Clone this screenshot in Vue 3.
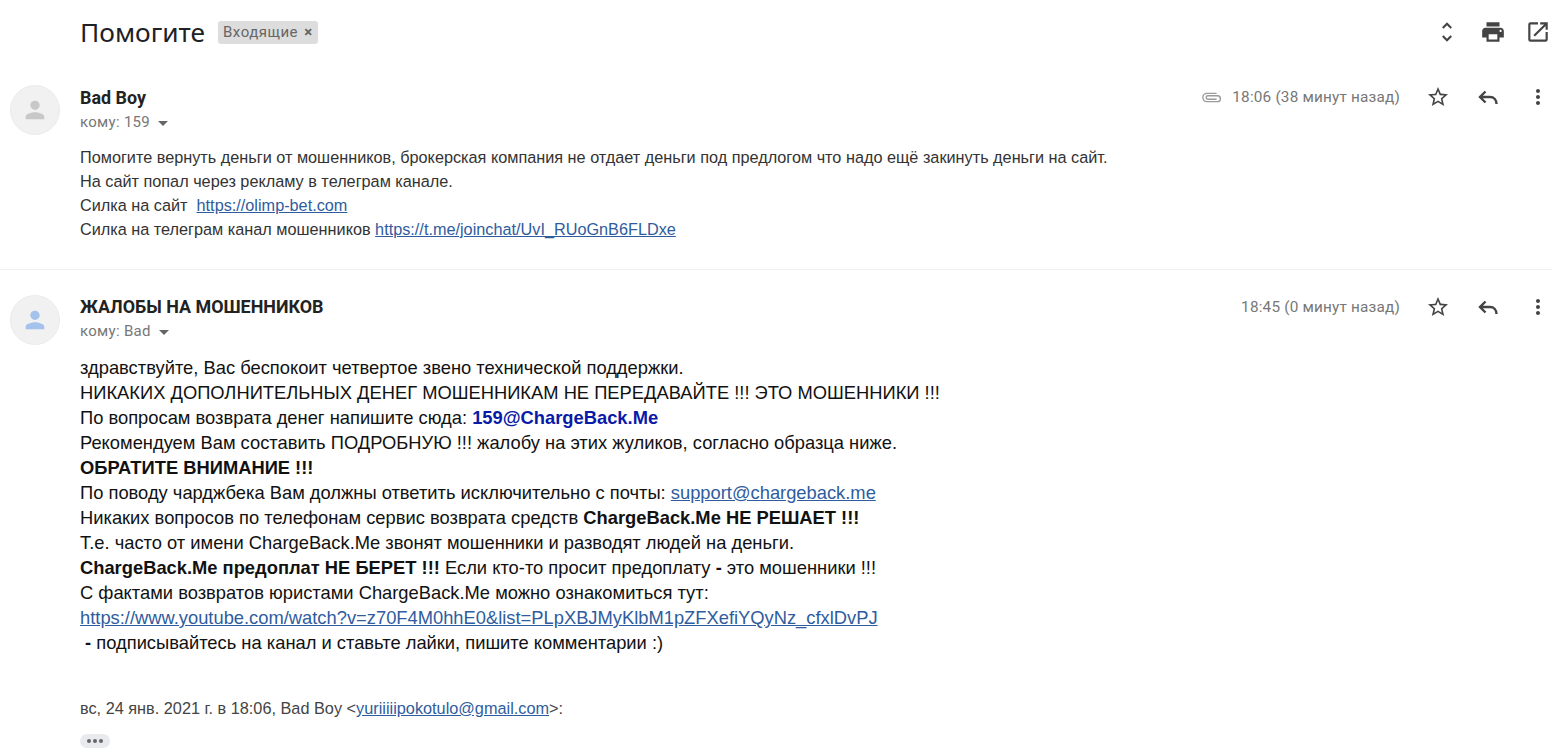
<template>
  <div class="page">
    <header class="subject-row">
      <h1 class="subject">Помогите</h1>
      <span class="label">Входящие <span class="label-x">×</span></span>
      <div class="top-icons">
        <svg class="icon" viewBox="0 0 24 24"><path d="M12 5.83 15.17 9l1.41-1.41L12 3 7.41 7.59 8.83 9 12 5.83zm0 12.34L8.83 15l-1.41 1.41L12 21l4.59-4.59L15.17 15 12 18.17z" /></svg>
        <svg class="icon" viewBox="0 0 24 24"><path d="M19 8H5c-1.66 0-3 1.34-3 3v6h4v4h12v-4h4v-6c0-1.66-1.34-3-3-3zm-3 11H8v-5h8v5zm3-7c-.55 0-1-.45-1-1s.45-1 1-1 1 .45 1 1-.45 1-1 1zm-1-9H6v4h12V3z" /></svg>
        <svg class="icon" viewBox="0 0 24 24"><path d="M19 19H5V5h7V3H5a2 2 0 0 0-2 2v14a2 2 0 0 0 2 2h14c1.1 0 2-.9 2-2v-7h-2v7zM14 3v2h3.59l-9.83 9.83 1.41 1.41L19 6.41V10h2V3h-7z" /></svg>
      </div>
    </header>

    <section class="message first">
      <div class="avatar">
        <svg viewBox="0 0 24 24" class="avatar-icon grey"><path d="M12 12c2.2 0 4-1.8 4-4s-1.8-4-4-4-4 1.8-4 4 1.8 4 4 4zm0 2c-2.7 0-8 1.3-8 4v2h16v-2c0-2.7-5.3-4-8-4z" /></svg>
      </div>
      <div class="content">
        <div class="head">
          <div class="who">
            <div class="sender">Bad Boy</div>
            <div class="to">кому: 159 <i class="caret"></i></div>
          </div>
          <div class="meta">
            <svg class="clip" viewBox="0 0 24 12"><path d="M17 1.5H6.5a4.5 4.5 0 0 0 0 9H18a3.2 3.2 0 0 0 0-6.4H7.5a1.9 1.9 0 0 0 0 3.8H17" fill="none" stroke="#9a9a9a" stroke-width="1.5" /></svg>
            <span class="time">18:06 (38 минут назад)</span>
            <svg class="icon small" viewBox="0 0 24 24"><path d="M22 9.24l-7.19-.62L12 2 9.19 8.63 2 9.24l5.46 4.73L5.82 21 12 17.27 18.18 21l-1.63-7.03L22 9.24zM12 15.4l-3.76 2.27 1-4.28-3.32-2.88 4.38-.38L12 6.1l1.71 4.04 4.38.38-3.32 2.88 1 4.28L12 15.4z" /></svg>
            <svg class="icon small" viewBox="0 0 24 24"><path d="M9.5 6.5 4 12l5.5 5.5M4.5 12H14c4 0 6.5 3 6.5 7" fill="none" stroke="#444" stroke-width="2.4" /></svg>
            <svg class="icon small" viewBox="0 0 24 24"><path d="M12 8c1.1 0 2-.9 2-2s-.9-2-2-2-2 .9-2 2 .9 2 2 2zm0 2c-1.1 0-2 .9-2 2s.9 2 2 2 2-.9 2-2-.9-2-2-2zm0 6c-1.1 0-2 .9-2 2s.9 2 2 2 2-.9 2-2-.9-2-2-2z" /></svg>
          </div>
        </div>
        <div class="body small-body">
          <div>Помогите вернуть деньги от мошенников, брокерская компания не отдает деньги под предлогом что надо ещё закинуть деньги на сайт.</div>
          <div>На сайт попал через рекламу в телеграм канале.</div>
          <div>Силка на сайт &nbsp;<a>https://olimp-bet.com</a></div>
          <div>Силка на телеграм канал мошенников <a>https://t.me/joinchat/UvI_RUoGnB6FLDxe</a></div>
        </div>
      </div>
    </section>

    <section class="message second">
      <div class="avatar">
        <svg viewBox="0 0 24 24" class="avatar-icon blue"><path d="M12 12c2.2 0 4-1.8 4-4s-1.8-4-4-4-4 1.8-4 4 1.8 4 4 4zm0 2c-2.7 0-8 1.3-8 4v2h16v-2c0-2.7-5.3-4-8-4z" /></svg>
      </div>
      <div class="content">
        <div class="head">
          <div class="who">
            <div class="sender">ЖАЛОБЫ НА МОШЕННИКОВ</div>
            <div class="to">кому: Bad <i class="caret"></i></div>
          </div>
          <div class="meta">
            <span class="time">18:45 (0 минут назад)</span>
            <svg class="icon small" viewBox="0 0 24 24"><path d="M22 9.24l-7.19-.62L12 2 9.19 8.63 2 9.24l5.46 4.73L5.82 21 12 17.27 18.18 21l-1.63-7.03L22 9.24zM12 15.4l-3.76 2.27 1-4.28-3.32-2.88 4.38-.38L12 6.1l1.71 4.04 4.38.38-3.32 2.88 1 4.28L12 15.4z" /></svg>
            <svg class="icon small" viewBox="0 0 24 24"><path d="M9.5 6.5 4 12l5.5 5.5M4.5 12H14c4 0 6.5 3 6.5 7" fill="none" stroke="#444" stroke-width="2.4" /></svg>
            <svg class="icon small" viewBox="0 0 24 24"><path d="M12 8c1.1 0 2-.9 2-2s-.9-2-2-2-2 .9-2 2 .9 2 2 2zm0 2c-1.1 0-2 .9-2 2s.9 2 2 2 2-.9 2-2-.9-2-2-2zm0 6c-1.1 0-2 .9-2 2s.9 2 2 2 2-.9 2-2-.9-2-2-2z" /></svg>
          </div>
        </div>
        <div class="body big-body">
          <div>здравствуйте, Вас беспокоит четвертое звено технической поддержки.</div>
          <div>НИКАКИХ ДОПОЛНИТЕЛЬНЫХ ДЕНЕГ МОШЕННИКАМ НЕ ПЕРЕДАВАЙТЕ !!! ЭТО МОШЕННИКИ !!!</div>
          <div>По вопросам возврата денег напишите сюда: <b class="mail">159@ChargeBack.Me</b></div>
          <div>Рекомендуем Вам составить ПОДРОБНУЮ !!! жалобу на этих жуликов, согласно образца ниже.</div>
          <div><b>ОБРАТИТЕ ВНИМАНИЕ !!!</b></div>
          <div>По поводу чарджбека Вам должны ответить исключительно с почты: <a>support@chargeback.me</a></div>
          <div>Никаких вопросов по телефонам сервис возврата средств <b>ChargeBack.Me НЕ РЕШАЕТ !!!</b></div>
          <div>Т.е. часто от имени ChargeBack.Me звонят мошенники и разводят людей на деньги.</div>
          <div><b>ChargeBack.Me предоплат НЕ БЕРЕТ !!!</b> Если кто-то просит предоплату <b>-</b> это мошенники !!!</div>
          <div>С фактами возвратов юристами ChargeBack.Me можно ознакомиться тут:</div>
          <div><a>https://www.youtube.com/watch?v=z70F4M0hhE0&amp;list=PLpXBJMyKlbM1pZFXefiYQyNz_cfxlDvPJ</a></div>
          <div>&nbsp;<b>-</b> подписывайтесь на канал и ставьте лайки, пишите комментарии :)</div>
        </div>
        <div class="quote-line">вс, 24 янв. 2021 г. в 18:06, Bad Boy &lt;<a>yuriiiiipokotulo@gmail.com</a>&gt;:</div>
        <div class="dots"><i></i><i></i><i></i></div>
      </div>
    </section>
  </div>
</template>

<script setup>
</script>

<style>
html, body {
  background: #fff;
  overflow: hidden;
}
</style>

<style scoped>
.page {
  width: 1567px;
  height: 754px;
  overflow: hidden;
  font-family: Roboto, "Noto Sans", sans-serif;
  color: #202124;
}

.subject-row {
  display: flex;
  align-items: center;
  height: 64px;
  padding-left: 80px;
}

.subject {
  margin: 0;
  font-family: "Noto Sans", Roboto, sans-serif;
  font-size: 26.3px;
  font-weight: 400;
  line-height: 64px;
}

.label {
  margin-left: 13px;
  padding: 0 5px;
  height: 23px;
  line-height: 23px;
  background: #dddddd;
  border-radius: 3px;
  font-size: 15px;
  color: #666;
  letter-spacing: 0.5px;
}

.label-x {
  margin-left: 2px;
  font-weight: 700;
}

.top-icons {
  display: flex;
  gap: 19.5px;
  margin-left: auto;
  margin-right: 16px;
}

.top-icons .icon {
  width: 26px;
  height: 26px;
}

.icon {
  width: 24px;
  height: 24px;
  fill: #444;
  flex: none;
}

.message {
  display: flex;
}

.first {
  width: 1552px;
  height: 206px;
  padding: 21px 0 0 10px;
  box-sizing: border-box;
  border-bottom: 1px solid #efefef;
}

.first .meta {
  margin-right: 2px;
}

.second {
  padding: 25px 0 0 10px;
}

.second .head {
  margin-top: -1px;
}

.second .meta {
  margin-top: 1px;
}

.avatar {
  width: 50px;
  height: 50px;
  border-radius: 50%;
  background: #f1f1f1;
  border: 1px solid #ebebeb;
  box-sizing: border-box;
  display: flex;
  align-items: center;
  justify-content: center;
  flex: none;
}

.avatar-icon {
  width: 28px;
  height: 28px;
}

.avatar-icon.grey {
  fill: #c8c8c8;
}

.avatar-icon.blue {
  fill: #a4c2ec;
}

.content {
  flex: 1;
  margin-left: 20px;
}

.head {
  display: flex;
  justify-content: space-between;
}

.sender {
  font-size: 17.9px;
  font-weight: 700;
  line-height: 24px;
  color: #222;
  margin-top: 1px;
}

.to {
  display: flex;
  align-items: center;
  font-size: 15px;
  line-height: 24px;
  color: #777;
  letter-spacing: 0.3px;
}

.caret {
  margin-left: 8px;
  margin-top: 2px;
  border: 5px solid transparent;
  border-top-color: #666;
  border-bottom: 0;
}

.meta {
  display: flex;
  align-items: center;
  height: 24px;
  margin-right: 17px;
}

.clip {
  width: 22px;
  height: 11px;
  margin-right: 9px;
}

.time {
  font-size: 15.3px;
  color: #777;
  letter-spacing: 0.2px;
  margin-right: 26px;
}

.small + .small {
  margin-left: 26px;
}

.body a,
.quote-line a {
  color: #2f5c9e;
  text-decoration: underline;
}

.body {
  font-family: "Liberation Sans", Arial, sans-serif;
}

.small-body {
  margin-top: 11px;
  font-size: 16.26px;
  line-height: 24px;
  color: #333;
}

.big-body {
  margin-top: 12px;
  font-size: 18.33px;
  line-height: 25px;
  color: #111;
}

.mail {
  color: #0a1aa8;
}

.quote-line {
  margin-top: 41px;
  font-family: "Liberation Sans", Arial, sans-serif;
  font-size: 16.3px;
  line-height: 24px;
  color: #444;
}

.dots {
  display: flex;
  align-items: center;
  justify-content: center;
  gap: 2px;
  width: 30px;
  height: 14px;
  margin-top: 14px;
  background: #e8eaed;
  border-radius: 7px;
}

.dots i {
  width: 4px;
  height: 4px;
  border-radius: 50%;
  background: #666;
}
</style>
